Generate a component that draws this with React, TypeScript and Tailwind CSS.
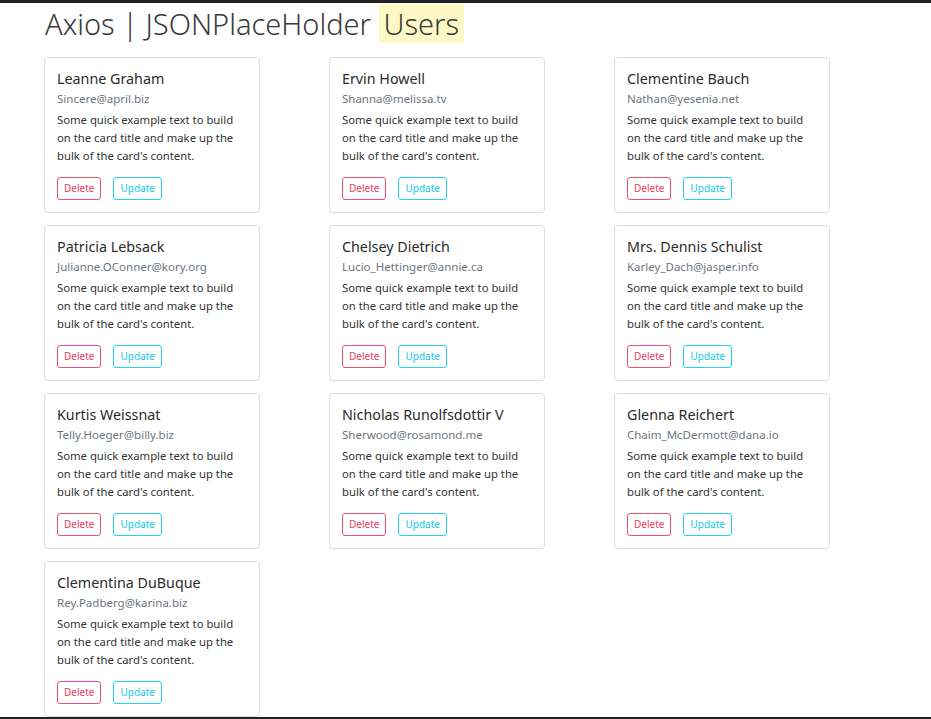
import React from 'react';

type User = {
  name: string;
  email: string;
};

const users: User[] = [
  { name: 'Leanne Graham', email: 'Sincere@april.biz' },
  { name: 'Ervin Howell', email: 'Shanna@melissa.tv' },
  { name: 'Clementine Bauch', email: 'Nathan@yesenia.net' },
  { name: 'Patricia Lebsack', email: 'Julianne.OConner@kory.org' },
  { name: 'Chelsey Dietrich', email: 'Lucio_Hettinger@annie.ca' },
  { name: 'Mrs. Dennis Schulist', email: 'Karley_Dach@jasper.info' },
  { name: 'Kurtis Weissnat', email: 'Telly.Hoeger@billy.biz' },
  { name: 'Nicholas Runolfsdottir V', email: 'Sherwood@rosamond.me' },
  { name: 'Glenna Reichert', email: 'Chaim_McDermott@dana.io' },
  { name: 'Clementina DuBuque', email: 'Rey.Padberg@karina.biz' },
];

const UserCard = ({ user }: { user: User }) => {
  return (
    <div className="h-[156px] rounded-[4px] border border-[#dcdcdc] bg-white px-[12px] pt-[12px]">
      <h5 className="text-[14.3px] leading-[18px] text-[#2b2b2b]">{user.name}</h5>
      <h6 className="mt-[3px] text-[11.5px] leading-[16px] text-[#6c757d]">{user.email}</h6>
      <p className="mt-[4px] text-[11.3px] leading-[18px] text-[#333]">
        Some quick example text to build on the card title and make up the bulk of the card's content.
      </p>
      <div className="mt-[12px] flex gap-[12px]">
        <button className="h-[23px] rounded-[3px] border border-[#f0506e] px-[6px] text-[10px] text-[#ea3d5e]">
          Delete
        </button>
        <button className="h-[23px] rounded-[3px] border border-[#22d4f0] px-[6px] text-[10px] text-[#15c9ea]">
          Update
        </button>
      </div>
    </div>
  );
};

export default function App() {
  return (
    <div className="flex h-screen flex-col overflow-hidden border-t-[3px] border-b-2 border-[#222] bg-white font-['Noto_Sans',sans-serif]">
      <div className="pl-[45px]">
        <h1 className="text-[29px] font-light leading-[41px] text-[#3a3a3a]">
          Axios | JSONPlaceHolder <mark className="bg-[#fdf9c6] px-[5px] text-[#3a3a3a]">Users</mark>
        </h1>
        <div className="-ml-px mt-[13px] grid grid-cols-[216px_216px_216px] gap-x-[69px] gap-y-[12px]">
          {users.map((user) => (
            <UserCard key={user.email} user={user} />
          ))}
        </div>
      </div>
    </div>
  );
}
